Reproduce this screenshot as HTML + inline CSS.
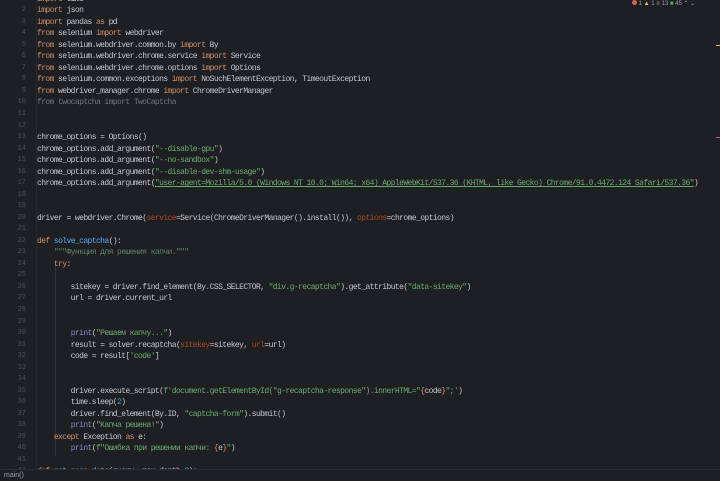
<!DOCTYPE html>
<html><head><meta charset="utf-8"><style>
html,body{margin:0;padding:0;width:720px;height:480px;overflow:hidden;background:#1e1f22;}
#ed{position:absolute;left:0;top:0;width:720px;height:480px;background:#1e1f22;font-family:"Liberation Mono","DejaVu Sans Mono","Noto Sans CJK SC",monospace;font-size:8px;letter-spacing:-0.59px;color:#c4c6cc;}
.ln{position:absolute;left:0;width:26px;text-align:right;color:#4b5059;font-size:7px;letter-spacing:0}
.c{position:absolute;left:37px;white-space:pre;}
.k{color:#cf8e6d}.s{color:#6aab73}.f{color:#56a8f5}.p{color:#aa4926}.n{color:#2aacb8}.g{color:#6f737a}.b{color:#8888c6}.d{color:#5f826b}
.u{text-decoration:underline;text-decoration-color:#6aab73}
#bar{position:absolute;left:0;top:469px;width:720px;height:11px;background:#1e1f22;border-top:1px solid #2b2d30;color:#9da0a8;font-family:"Liberation Sans",sans-serif;font-size:7px;letter-spacing:0;line-height:11px;padding-left:4px;box-sizing:border-box;}
.guide{position:absolute;width:1px;background:#2f3135;}
</style></head><body><div id="ed">
<div class="guide" style="left:55px;top:260px;height:196px"></div>
<div class="guide" style="left:36px;top:0;height:469px;background:#26282c"></div>
<div style="position:absolute;left:632px;top:0;font-family:'Liberation Sans',sans-serif;font-size:6px;letter-spacing:0;color:#9da0a8;white-space:nowrap"><span style="display:inline-block;width:5px;height:5px;border-radius:50%;background:#db5c5c"></span> 1 <span style="color:#e5c07b">▲</span> 1 <span style="color:#9da0a8">≡</span> 13 <span style="color:#5fb05f">■</span> 45 ⌃ ⌄</div>
<div style="position:absolute;left:716px;top:45px;width:4px;height:1px;background:#e5c07b"></div>
<div style="position:absolute;left:716px;top:137px;width:4px;height:1px;background:#c75c8a"></div>
<div id="code"></div>
<div id="bar">main()</div>
</div>
<script>
var L=[
'<span class="k">import</span> time',
'<span class="k">import</span> json',
'<span class="k">import</span> pandas <span class="k">as</span> pd',
'<span class="k">from</span> selenium <span class="k">import</span> webdriver',
'<span class="k">from</span> selenium.webdriver.common.by <span class="k">import</span> By',
'<span class="k">from</span> selenium.webdriver.chrome.service <span class="k">import</span> Service',
'<span class="k">from</span> selenium.webdriver.chrome.options <span class="k">import</span> Options',
'<span class="k">from</span> selenium.common.exceptions <span class="k">import</span> NoSuchElementException, TimeoutException',
'<span class="k">from</span> webdriver_manager.chrome <span class="k">import</span> ChromeDriverManager',
'<span class="g">from twocaptcha import TwoCaptcha</span>',
'','',
'chrome_options = Options()',
'chrome_options.add_argument(<span class="s">"--disable-gpu"</span>)',
'chrome_options.add_argument(<span class="s">"--no-sandbox"</span>)',
'chrome_options.add_argument(<span class="s">"--disable-dev-shm-usage"</span>)',
'chrome_options.add_argument(<span class="s u">"user-agent=Mozilla/5.0 (Windows NT 10.0; Win64; x64) AppleWebKit/537.36 (KHTML, like Gecko) Chrome/91.0.4472.124 Safari/537.36"</span>)',
'','',
'driver = webdriver.Chrome(<span class="p">service</span>=Service(ChromeDriverManager().install()), <span class="p">options</span>=chrome_options)',
'',
'<span class="k">def</span> <span class="f">solve_captcha</span>():',
'    <span class="d">"""Функция для решения капчи."""</span>',
'    <span class="k">try</span>:',
'',
'        sitekey = driver.find_element(By.CSS_SELECTOR, <span class="s">"div.g-recaptcha"</span>).get_attribute(<span class="s">"data-sitekey"</span>)',
'        url = driver.current_url',
'','',
'        <span class="b">print</span>(<span class="s">"Решаем капчу..."</span>)',
'        result = solver.recaptcha(<span class="p">sitekey</span>=sitekey, <span class="p">url</span>=url)',
'        code = result[<span class="s">\'code\'</span>]',
'','',
'        driver.execute_script(<span class="s">f\'document.getElementById("g-recaptcha-response").innerHTML="</span><span class="k">{</span>code<span class="k">}</span><span class="s">";\'</span>)',
'        time.sleep(<span class="n">2</span>)',
'        driver.find_element(By.ID, <span class="s">"captcha-form"</span>).submit()',
'        <span class="b">print</span>(<span class="s">"Капча решена!"</span>)',
'    <span class="k">except</span> Exception <span class="k">as</span> e:',
'        <span class="b">print</span>(<span class="s">f"Ошибка при решении капчи: </span><span class="k">{</span>e<span class="k">}</span><span class="s">"</span>)',
'',
'<span class="k">def</span> <span class="f">get_page_data</span>(query, max_depth=<span class="n">3</span>):'
];
var h='';
for(var i=0;i<L.length;i++){var t=(-6.3+i*11.53).toFixed(2);
h+='<div class="ln" style="top:'+t+'px;line-height:11.5px">'+(i+1)+'</div><div class="c" style="top:'+t+'px;line-height:11.5px">'+L[i]+'</div>';}
document.getElementById('code').innerHTML=h;
</script>
</body></html>
